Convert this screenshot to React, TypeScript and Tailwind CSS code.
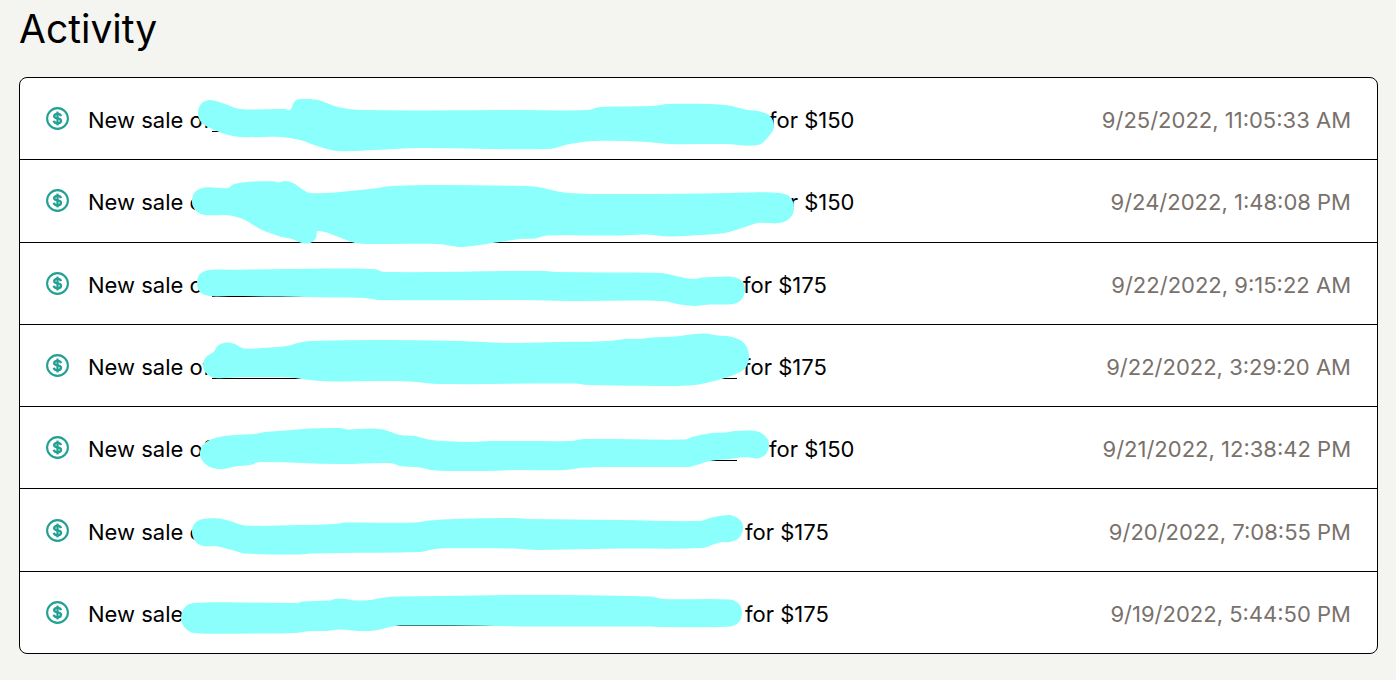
type Point = [number, number];

interface Sale {
  price: string;
  date: string;
  linkClass: string;
  mark: Point[];
}

const sales: Sale[] = [
  {
    price: "$150",
    date: "9/25/2022, 11:05:33 AM",
    linkClass: "w-[525px] mr-8",
    mark: [
      [18, 35], [21, 26], [30, 22], [45, 26], [60, 31], [105, 31], [110, 32], [115, 23], [122, 21],
      [138, 22], [158, 29], [183, 32], [340, 32], [408, 32], [420, 29], [473, 28], [488, 26],
      [545, 27], [568, 32], [578, 33], [590, 38], [594, 49], [589, 58], [578, 67], [546, 66],
      [490, 66], [467, 64], [415, 63], [390, 66], [368, 71], [240, 70], [195, 72], [158, 73],
      [140, 69], [120, 62], [100, 59], [60, 59], [45, 56], [30, 50], [21, 44],
    ],
  },
  {
    price: "$150",
    date: "9/24/2022, 1:48:08 PM",
    linkClass: "w-[525px] mr-8",
    mark: [
      [12, 42], [15, 32], [25, 27.5], [48, 28], [53, 24.5], [63, 22.5], [75, 21.5], [95, 21.5],
      [98, 22.5], [105, 21], [113, 23], [122, 29], [130, 33], [155, 32.5], [175, 30.5],
      [195, 28.5], [212, 26], [260, 25], [340, 26], [358, 27], [388, 33], [470, 34], [525, 33.5],
      [570, 32.5], [600, 33], [610, 37], [614, 47], [611, 57], [600, 63], [578, 63], [565, 67],
      [545, 73], [520, 75], [490, 76.5], [465, 74.5], [440, 75.5], [367, 75.5], [355, 78.5],
      [340, 79], [320, 82], [283, 87], [272, 86], [258, 84], [200, 84], [175, 83], [160, 77.5],
      [138, 71], [136, 78], [130, 83], [122, 83], [112, 79], [100, 76.5], [80, 69], [65, 60],
      [55, 56.5], [45, 55], [25, 55], [16, 51],
    ],
  },
  {
    price: "$175",
    date: "9/22/2022, 9:15:22 AM",
    linkClass: "w-[525px] mr-1.5",
    mark: [
      [17, 40], [20, 31], [29, 27], [60, 26.7], [110, 26], [150, 25.5], [195, 26.3], [204, 29],
      [340, 28], [365, 28], [375, 29], [480, 30], [492, 32], [505, 35], [515, 36], [523, 34.5],
      [532, 34], [553, 34], [562, 38], [565, 47], [561, 57], [553, 61], [530, 61.5], [515, 63],
      [500, 61.5], [482, 58], [390, 58], [340, 57], [200, 57], [185, 55], [150, 54.5],
      [100, 53.5], [50, 53], [30, 53], [20, 49],
    ],
  },
  {
    price: "$175",
    date: "9/22/2022, 3:29:20 AM",
    linkClass: "w-[525px] mr-1.5",
    mark: [
      [23, 40], [26, 32], [34, 26.5], [38, 20.5], [47, 17.5], [55, 19], [64, 23.5], [90, 22.5],
      [107, 21], [120, 17.5], [130, 16], [200, 15], [280, 16], [325, 18], [340, 18], [380, 17],
      [428, 16], [445, 14], [460, 14], [472, 12.5], [495, 11.5], [515, 9], [525, 8.5],
      [538, 10.5], [552, 12], [564, 18], [569, 30], [566, 42], [558, 48], [545, 53], [530, 57],
      [515, 60], [490, 61], [408, 60], [395, 58.5], [260, 59], [230, 56.5], [200, 56],
      [150, 56.5], [130, 55], [110, 52.5], [90, 52], [60, 52], [35, 53], [26, 48],
    ],
  },
  {
    price: "$150",
    date: "9/21/2022, 12:38:42 PM",
    linkClass: "w-[525px] mr-8",
    mark: [
      [20, 45], [25, 36], [37, 30.5], [55, 28], [75, 27], [85, 25], [105, 23.5], [130, 21.5],
      [160, 21], [168, 22.5], [190, 21.5], [203, 22.5], [220, 28], [235, 29], [242, 31],
      [255, 33.5], [290, 35], [310, 34], [340, 34], [390, 34], [405, 32], [505, 32.5], [512, 30],
      [532, 26], [545, 25.5], [555, 24], [575, 24], [584, 28], [589, 36], [586, 47], [577, 51.5],
      [570, 50.5], [560, 50.5], [550, 52], [530, 54], [510, 60], [505, 60], [405, 60.5],
      [385, 63], [340, 63], [300, 64], [255, 63.5], [240, 60.5], [220, 59], [210, 56], [160, 57],
      [80, 55], [70, 58], [55, 59.5], [42, 62], [30, 60], [22, 53],
    ],
  },
  {
    price: "$175",
    date: "9/20/2022, 7:08:55 PM",
    linkClass: "w-[493px] mr-10",
    mark: [
      [12, 42], [15, 34], [23, 30], [38, 29.5], [50, 32], [65, 36.5], [120, 36], [155, 35],
      [165, 33.5], [235, 33.5], [250, 31.5], [275, 30], [335, 29], [347, 30], [440, 31],
      [520, 32], [530, 29], [543, 26.5], [552, 26.5], [561, 32], [563, 40], [559, 49], [550, 53],
      [543, 53], [535, 55], [522, 59], [440, 59.5], [360, 61], [347, 60.5], [335, 59.5],
      [275, 59.3], [255, 60], [240, 63], [160, 64], [130, 64.5], [120, 65.5], [65, 64.5],
      [52, 61], [35, 57], [23, 57], [15, 52],
    ],
  },
  {
    price: "$175",
    date: "9/19/2022, 5:44:50 PM",
    linkClass: "w-[493px] mr-10",
    mark: [
      [1, 46], [5, 35], [14, 31], [60, 30.5], [118, 31], [122, 29.5], [150, 28.5], [155, 27],
      [165, 27], [175, 28.5], [190, 28], [205, 25.5], [215, 24.5], [260, 24], [340, 23],
      [470, 24.5], [483, 27], [550, 27.5], [559, 32], [562, 41], [559, 50], [550, 54.5],
      [480, 55], [470, 54.5], [340, 54.5], [300, 53.7], [225, 53.5], [215, 54], [195, 58.5],
      [180, 59], [160, 57.5], [145, 59], [130, 59], [115, 61], [70, 61.5], [14, 61], [5, 56],
    ],
  },
];

// closed curve through all the points, with short handles so it doesn't overshoot
function outline(points: Point[]) {
  const n = points.length;
  let d = `M${points[0][0]} ${points[0][1]}`;
  for (let i = 0; i < n; i++) {
    const a = points[(i + n - 1) % n];
    const b = points[i];
    const c = points[(i + 1) % n];
    const e = points[(i + 2) % n];
    const len = Math.hypot(c[0] - b[0], c[1] - b[1]) / 3;
    const tb = Math.hypot(c[0] - a[0], c[1] - a[1]);
    const tc = Math.hypot(e[0] - b[0], e[1] - b[1]);
    const x1 = b[0] + ((c[0] - a[0]) / tb) * len;
    const y1 = b[1] + ((c[1] - a[1]) / tb) * len;
    const x2 = c[0] - ((e[0] - b[0]) / tc) * len;
    const y2 = c[1] - ((e[1] - b[1]) / tc) * len;
    d += `C${x1} ${y1} ${x2} ${y2} ${c[0]} ${c[1]}`;
  }
  return d + "Z";
}

function Marker({ points }: { points: Point[] }) {
  return (
    <svg
      aria-hidden="true"
      viewBox="0 0 620 90"
      className="pointer-events-none absolute top-0 left-40 z-10 h-[90px] w-[620px] overflow-visible fill-[#8bfffb]"
    >
      <path d={outline(points)} />
    </svg>
  );
}

function DollarIcon() {
  return (
    <svg
      aria-hidden="true"
      viewBox="0 0 23 23"
      fill="none"
      stroke="currentColor"
      className="h-[23px] w-[23px] shrink-0 text-[#23a094]"
    >
      <circle cx="11.5" cy="11.5" r="10.4" strokeWidth="2.1" />
      <path
        d="M15 9.1C14.6 7.6 13.3 6.9 11.5 6.9C9.6 6.9 8.2 7.7 8.2 9.2C8.2 12.3 15 10.5 15 13.8C15 15.4 13.5 16.2 11.5 16.2C9.5 16.2 8.1 15.3 7.8 13.7"
        strokeWidth="2.4"
      />
      <path d="M11.5 4.6V18.4" strokeWidth="2.2" />
    </svg>
  );
}

function SaleRow({ sale }: { sale: Sale }) {
  return (
    <li className="relative flex flex-1 items-center gap-[19px] px-[26px]">
      <DollarIcon />
      <p className="flex flex-1 items-center whitespace-nowrap pt-[3px]">
        <span className="w-[124px]">New sale of</span>
        <a
          href="#"
          aria-label="Product"
          className={`h-6 border-b border-black ${sale.linkClass}`}
        />
        <span>for {sale.price}</span>
      </p>
      <time className="whitespace-nowrap pt-[3px] text-stone-500">{sale.date}</time>
      <Marker points={sale.mark} />
    </li>
  );
}

export default function App() {
  return (
    <main className="flex min-h-screen flex-col bg-[#f4f4f0] px-[19px] pt-1 pb-[26px] font-['Inter',sans-serif] text-[22px] leading-7 text-black">
      <h1 className="mb-6 text-[39px] leading-[49px]">Activity</h1>
      <ul className="mr-[-1px] flex grow flex-col divide-y divide-black rounded-lg border border-black bg-white">
        {sales.map((sale) => (
          <SaleRow key={sale.date} sale={sale} />
        ))}
      </ul>
    </main>
  );
}
